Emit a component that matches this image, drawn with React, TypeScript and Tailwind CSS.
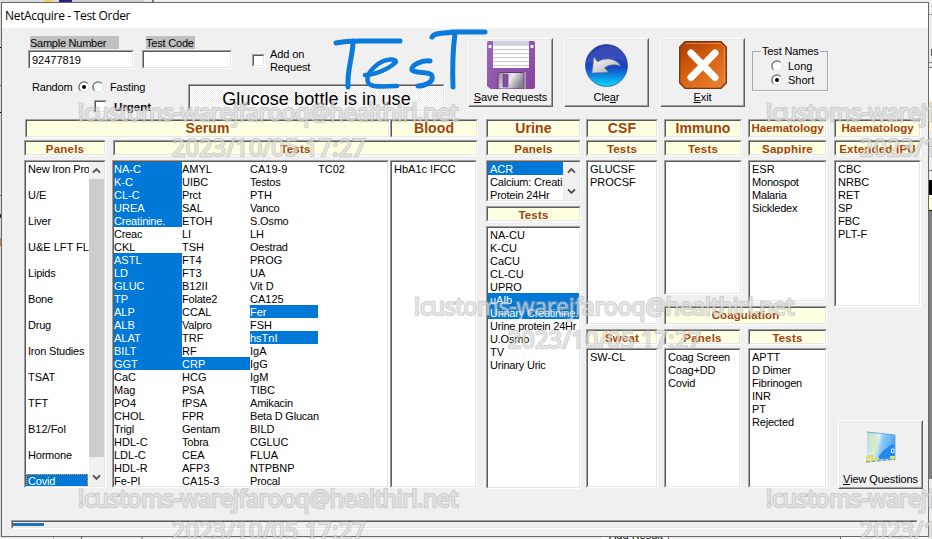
import type { ReactNode } from "react";

const mixed = (t: string) => (/[a-z]{3}/.test(t) ? "tracking-[-0.2px]" : "");

function Sunken({ className = "", inner = "bg-white", children }: { className?: string; inner?: string; children?: ReactNode }) {
  return (
    <div className={`flex shrink-0 border border-t-[#a0a0a0] border-l-[#a0a0a0] border-r-white border-b-white ${className}`}>
      <div className={`min-w-0 flex-1 overflow-hidden border border-t-[#5a5a5a] border-l-[#5a5a5a] border-r-[#e6e6e6] border-b-[#e6e6e6] ${inner}`}>
        {children}
      </div>
    </div>
  );
}

const SMALL = "text-[11.5px] leading-[13px] tracking-[0.2px] pt-[2px]";
const BIG = "text-[14px] leading-[14px] tracking-[0.1px] pb-px";
const MED = "text-[11.5px] leading-[11px] tracking-[0px] pb-[1px]";

function Head({ className = "", size = SMALL, children }: { className?: string; size?: string; children: ReactNode }) {
  return (
    <Sunken className={className} inner={`flex items-center justify-center bg-[#ffffe1] font-bold whitespace-nowrap text-[#a04310] ${size}`}>
      {children}
    </Sunken>
  );
}

function Item({ text, on = false, className = "pl-[2px]" }: { text: string; on?: boolean; className?: string }) {
  return (
    <div className={`h-[13px] overflow-hidden leading-[15px] whitespace-nowrap ${mixed(text)} ${on ? "bg-[#0078d7] text-white" : "text-black"} ${className}`}>
      {text}
    </div>
  );
}

function List({ items, on = [], className }: { items: string[]; on?: string[]; className: string }) {
  return (
    <Sunken className={className}>
      {items.map((t) => (
        <Item key={t} text={t} on={on.includes(t)} />
      ))}
    </Sunken>
  );
}

function Chevron({ down = false }: { down?: boolean }) {
  return (
    <svg width="9" height="7" viewBox="0 0 9 7" fill="none" stroke="#505050" strokeWidth="1.9">
      <path d={down ? "M1 1.3 4.5 4.9 8 1.3" : "M1 5.7 4.5 2.1 8 5.7"} />
    </svg>
  );
}

function Radio({ on = false }: { on?: boolean }) {
  return (
    <svg width="12" height="12" viewBox="0 0 12 12">
      <circle cx="6" cy="6" r="5" fill="#fff" stroke="#e3e3e3" />
      <path d="M2.4 9.6A5 5 0 0 1 9.6 2.4" fill="none" stroke="#6b6b6b" strokeWidth="1.3" />
      {on && <circle cx="6" cy="6" r="2" fill="#000" />}
    </svg>
  );
}

function PushButton({ label, hot, children }: { label: string; hot: number; children: ReactNode }) {
  return (
    <div className="flex h-[69px] w-[85px] shrink-0 border border-t-white border-r-[#606060] border-b-[#606060] border-l-white bg-[#f0f0f0]">
      <div className="flex flex-1 flex-col items-center justify-between border border-t-[#e8e8e8] border-r-[#a0a0a0] border-b-[#a0a0a0] border-l-[#e8e8e8] pb-px">
        <div className="flex flex-1 items-center justify-center">{children}</div>
        <div className="h-[14px] leading-[14px] tracking-[-0.1px] whitespace-nowrap">
          {label.slice(0, hot)}
          <span className="underline underline-offset-1">{label[hot]}</span>
          {label.slice(hot + 1)}
        </div>
      </div>
    </div>
  );
}

const panels = ["New Iron Pro", "U/E", "Liver", "U&E LFT FLU", "Lipids", "Bone", "Drug", "Iron Studies", "TSAT", "TFT", "B12/Fol", "Hormone", "Covid"];

const serum = [
  ["NA-C", "K-C", "CL-C", "UREA", "Creatinine.", "Creac", "CKL", "ASTL", "LD", "GLUC", "TP", "ALP", "ALB", "ALAT", "BILT", "GGT", "CaC", "Mag", "PO4", "CHOL", "Trigl", "HDL-C", "LDL-C", "HDL-R", "Fe-Pl"],
  ["AMYL", "UIBC", "Prct", "SAL", "ETOH", "LI", "TSH", "FT4", "FT3", "B12II", "Folate2", "CCAL", "Valpro", "TRF", "RF", "CRP", "HCG", "PSA", "fPSA", "FPR", "Gentam", "Tobra", "CEA", "AFP3", "CA15-3"],
  ["CA19-9", "Testos", "PTH", "Vanco", "S.Osmo", "LH", "Oestrad", "PROG", "UA", "Vit D", "CA125", "Fer", "FSH", "hsTnI", "IgA", "IgG", "IgM", "TIBC", "Amikacin", "Beta D Glucan", "BILD", "CGLUC", "FLUA", "NTPBNP", "Procal"],
  ["TC02"],
];
const chosen = ["NA-C", "K-C", "CL-C", "UREA", "Creatinine.", "ASTL", "LD", "GLUC", "TP", "ALP", "ALB", "ALAT", "BILT", "GGT", "CRP", "Fer", "hsTnI"];

function Mark({ className, children }: { className: string; children: string }) {
  return (
    <div className={`pointer-events-none absolute h-[24px] text-[23px] leading-[24px] whitespace-nowrap text-[#f2f2f2]/55 [-webkit-text-stroke:2.4px_rgba(165,165,165,0.45)] [paint-order:stroke_fill] [font-family:'Open_Sans','Noto_Sans',sans-serif] ${className}`}>
      {children}
    </div>
  );
}
const ADDR = "!customs-warejfarooq@healthirl.net";
const STAMP = "2023/10/05 17:27";

function Floppy() {
  return (
    <svg width="48" height="48" viewBox="0 0 48 48">
      <defs>
        <linearGradient id="fp" x1="0" y1="0" x2="1" y2="1">
          <stop offset="0" stopColor="#9c68b8" />
          <stop offset="1" stopColor="#86429f" />
        </linearGradient>
        <linearGradient id="fm" x1="0" y1="0" x2="1" y2="0.4">
          <stop offset="0" stopColor="#8b8b90" />
          <stop offset="0.55" stopColor="#e8e8ea" />
          <stop offset="1" stopColor="#85858b" />
        </linearGradient>
      </defs>
      <path d="M0 1.5Q0 0 1.5 0H46.500Q48 0 48 1.500V46Q48 48 46 48H3.500L0 45Z" fill="url(#fp)" />
      <path d="M6 0H42V27H6Z" fill="#fff" />
      <path d="M6 0H42V5H6Z" fill="#cfd3df" />
      <path d="M6 8.500H42M6 12.500H42M6 16.500H42M6 20.500H42M6 24.500H42" stroke="#c6cad6" />
      <path d="M1.500 4H4.500V7H1.500ZM43.500 4H46.500V7H43.500Z" fill="#f3e9f7" />
      <path d="M11 48V34Q11 31.500 13.500 31.500H37V48Z" fill="url(#fm)" stroke="#65327c" />
      <path d="M16 33.500H21V46H16Z" fill="#8b4aa3" stroke="#69377e" strokeWidth="0.7" />
      <path d="M38 31V48" stroke="#dccbe5" />
    </svg>
  );
}

function Undo() {
  return (
    <svg width="43" height="43" viewBox="0 0 43 43">
      <defs>
        <linearGradient id="ub" x1="0" y1="0" x2="0" y2="1">
          <stop offset="0" stopColor="#3037a5" />
          <stop offset="0.55" stopColor="#1848c2" />
          <stop offset="0.8" stopColor="#0c9be8" />
          <stop offset="1" stopColor="#12dcf4" />
        </linearGradient>
        <linearGradient id="ua" x1="0" y1="0" x2="1" y2="1">
          <stop offset="0" stopColor="#fff" />
          <stop offset="1" stopColor="#a9a9ad" />
        </linearGradient>
      </defs>
      <circle cx="21.500" cy="21.500" r="21" fill="url(#ub)" stroke="#2740a0" strokeWidth="0.7" />
      <path d="M1.500 19C5 7 15 2 24 2 34 2 40 10 41 17 28 11 14 20 1.500 19Z" fill="#5361c4" opacity="0.4" />
      <path d="M9 13 12.500 18C19 13.500 31 13.500 35.500 22 30 19.800 23.500 20.500 19.500 24L23.500 28.300 7 29Z" fill="url(#ua)" stroke="#667087" strokeWidth="0.5" />
    </svg>
  );
}

function Cross() {
  return (
    <svg width="48" height="48" viewBox="0 0 48 48">
      <defs>
        <linearGradient id="xo" x1="0" y1="0" x2="0.7" y2="1">
          <stop offset="0" stopColor="#a73c03" />
          <stop offset="0.5" stopColor="#d65d0c" />
          <stop offset="1" stopColor="#e57d2e" />
        </linearGradient>
      </defs>
      <path d="M6 .7H42L47.300 6V42L42 47.300H6L.7 42V6Z" fill="url(#xo)" stroke="#78320e" strokeWidth="1.300" />
      <path d="M6.500 2.500H41.500L45.500 6.500V41.500" fill="none" stroke="#eda065" strokeWidth="0.7" />
      <path d="M12 12 36 36.500M36 12 12 36.500" stroke="#fff" strokeWidth="7" strokeLinecap="round" />
    </svg>
  );
}

function Picture() {
  return (
    <svg width="30" height="32" viewBox="0 0 30 32">
      <defs>
        <linearGradient id="pv" x1="0" y1="0" x2="1" y2="0.3">
          <stop offset="0" stopColor="#9fd6ea" />
          <stop offset="0.42" stopColor="#e2f5fd" />
          <stop offset="0.6" stopColor="#8accf8" />
          <stop offset="1" stopColor="#4aa2ee" />
        </linearGradient>
      </defs>
      <path d="M1 1 29 4V28L1 30Z" fill="url(#pv)" />
      <path d="M1 1 29 4V28" fill="none" stroke="#5c9cc6" strokeWidth="0.8" />
      <path d="M2 3 12 4V22H4Z" fill="#dce6b7" opacity="0.7" />
      <path d="M13 25Q17 19 21 17Q25 12 28.500 14V27L13 28Z" fill="#2388e8" />
      <path d="M0 25 7 23 8 27 13 26.500V29L0 31Z" fill="#d9df73" />
      <path d="M24 25H29V28L24 28.500Z" fill="#d9df73" />
      <path d="M2 28H5M25.500 18H28V21.500H25.500Z" stroke="#fff" strokeWidth="0.8" fill="none" />
      <path d="M0 31 29 28.300" stroke="#456b8c" strokeWidth="0.8" strokeDasharray="4 1.500" />
    </svg>
  );
}

export default function App() {
  return (
    <div className="relative flex h-[539px] w-[932px] flex-col overflow-hidden bg-[#ececec] text-[11px] text-black [font-family:'Liberation_Sans',Arial,sans-serif]">
      <div className="flex h-[2px] shrink-0">
        <div className="w-[44px] bg-[#dedede]" />
        <div className="w-[9px] bg-[#f1cf67]" />
        <div className="w-[6px] bg-[#dddddd]" />
        <div className="w-[13px] bg-[#25237c]" />
        <div className="w-[72px] bg-[#cfcfcf]" />
        <div className="w-[10px] border-r-2 border-[#777] bg-[#e8e8e8]" />
        <div className="flex-1 bg-[#ededed]" />
      </div>

      <div className="flex h-[535px] shrink-0">
        <div className="flex w-px flex-col bg-[#d9d9d9] pt-[45px]">
          <div className="h-px bg-black" />
          <div className="mt-[37px] h-px bg-[#337dba]" />
          <div className="mt-[26px] h-px bg-black" />
          <div className="mt-[82px] h-px bg-[#2f76b2]" />
          <div className="mt-[18px] h-[4px] bg-[#252850]" />
          <div className="mt-[20px] h-[8px] bg-[#b98b51]" />
        </div>

        <div className="flex w-[928px] flex-col border border-[#686868] bg-[#f0f0f0]">
          <div className="flex h-[25px] shrink-0 items-center bg-white pl-[3px] text-[12px] tracking-[-0.32px] [font-family:'Open_Sans','Noto_Sans',sans-serif]">
            NetAcquire - Test Order
          </div>

          <div className="flex h-[91px] shrink-0">
            <div className="flex w-[466px] flex-col pl-[26px]">
              <div className="flex h-[48px] pt-[8px]">
                <div className="flex w-[106px] flex-col">
                  <div className="ml-[2px] h-[13px] w-[89px] bg-[#c0c0c0] leading-[15px] tracking-[-0.25px]">Sample Number</div>
                  <Sunken className="mt-px h-[19px]" inner="bg-white pl-[2px] leading-[16px] tracking-[0px]">92477819</Sunken>
                </div>
                <div className="ml-[8px] flex w-[90px] flex-col">
                  <div className="ml-[4px] h-[13px] w-[49px] bg-[#c0c0c0] leading-[15px] tracking-[-0.2px] whitespace-nowrap">Test Code</div>
                  <Sunken className="mt-px h-[19px]" />
                </div>
                <div className="ml-[20px] flex">
                  <Sunken className="mt-[18px] h-[13px] w-[13px]" />
                  <div className="mt-[12px] ml-[5px] leading-[13px] tracking-[-0.1px]">Add on<br />Request</div>
                </div>
              </div>
              <div className="flex">
                <div className="flex w-[160px] flex-col">
                  <div className="mt-[4px] flex h-[14px] items-center pl-[4px] leading-[14px]">
                    <span className="w-[46px] tracking-[-0.2px]">Random</span>
                    <Radio on />
                    <span className="w-[2px]" />
                    <Radio />
                    <span className="ml-[6px] tracking-[-0.1px]">Fasting</span>
                  </div>
                  <div className="mt-[5px] flex h-[14px] items-center pl-[66px]">
                    <Sunken className="h-[13px] w-[13px]" />
                    <span className="ml-[7px] pt-px text-[11.5px] leading-[14px] font-bold">Urgent</span>
                  </div>
                </div>
                <Sunken
                  className="mt-[8px] h-[28px] w-[257px]"
                  inner="flex items-center justify-center whitespace-nowrap pt-[2px] text-[18px] leading-[20px] tracking-[0.1px] bg-[#f7f7f7] bg-[repeating-conic-gradient(#ececec_0_25%,#ffffff_0_50%)] bg-[size:2px_2px]"
                >
                  Glucose bottle is in use
                </Sunken>
              </div>
            </div>
            <div className="flex gap-[11px] pt-[10px]">
              <PushButton label="Save Requests" hot={0}><Floppy /></PushButton>
              <PushButton label="Clear" hot={3}><Undo /></PushButton>
              <PushButton label="Exit" hot={0}><Cross /></PushButton>
            </div>
            <fieldset className="mt-[17px] ml-[7px] h-[46px] w-[76px] border border-[#a8a8a8] pl-[18px] shadow-[1px_1px_0_#fff]">
              <legend className="-ml-[10px] px-[1px] leading-[13px] tracking-[-0.15px] whitespace-nowrap">Test Names</legend>
              <div className="mt-[1px] flex h-[14px] items-center gap-[5px]"><Radio /> Long</div>
              <div className="flex h-[14px] items-center gap-[5px]"><Radio on /> Short</div>
            </fieldset>
          </div>

          <div className="flex h-[370px] shrink-0 pl-[22px]">
            <div className="flex w-[454px] flex-col">
              <div className="flex pl-px">
                <Head className="h-[19px] w-[365px]" size={BIG}>Serum</Head>
                <Head className="h-[19px] w-[88px]" size={BIG}>Blood</Head>
              </div>
              <div className="mt-[2px] flex gap-[7px]">
                <Head className="h-[16px] w-[82px]">Panels</Head>
                <Head className="h-[16px] w-[365px]">Tests</Head>
              </div>
              <div className="mt-[4px] flex">
                <Sunken className="h-[328px] w-[82px]" inner="flex bg-white">
                  <div className="w-[63px]">
                    {panels.map((p) => (
                      <div key={p} className="h-[26px]">
                        <Item text={p} on={p === "Covid"} className={p === "Covid" ? "w-[62px] border border-dotted border-[#ff9a40] pl-px !leading-[12px]" : "pl-[2px]"} />
                      </div>
                    ))}
                  </div>
                  <div className="flex w-[15px] flex-col items-center justify-between bg-[#f0f0f0]">
                    <div className="flex h-[17px] items-center"><Chevron /></div>
                    <div className="w-full flex-1 bg-[#cdcdcd]" />
                    <div className="flex h-[29px] items-end pb-[5px]"><Chevron down /></div>
                  </div>
                </Sunken>
                <Sunken className="ml-[6px] h-[328px] w-[277px]" inner="flex bg-white">
                  {serum.map((col, i) => (
                    <div key={i} className="w-[68px]">
                      {col.map((t) => (
                        <Item
                          key={t}
                          text={t}
                          on={chosen.includes(t)}
                          className={t === "Beta D Glucan" ? "!overflow-visible" : ""}
                        />
                      ))}
                    </div>
                  ))}
                </Sunken>
                <List className="ml-px h-[328px] w-[87px]" items={["HbA1c IFCC"]} />
              </div>
            </div>

            <div className="ml-[8px] flex w-[95px] flex-col">
              <Head className="h-[19px]" size={BIG}>Urine</Head>
              <Head className="mt-[2px] h-[16px]">Panels</Head>
              <Sunken className="mt-[4px] h-[42px]" inner="flex bg-white">
                <div className="w-[75px] overflow-hidden">
                  <Item text="ACR" on />
                  <Item text="Calcium: Creatinine" />
                  <Item text="Protein 24Hr" />
                </div>
                <div className="flex flex-1 flex-col items-center justify-between bg-[#f0f0f0] py-[5px]">
                  <Chevron />
                  <Chevron down />
                </div>
              </Sunken>
              <Head className="mt-[4px] h-[16px]">Tests</Head>
              <List
                className="mt-[4px] h-[263px]"
                items={["NA-CU", "K-CU", "CaCU", "CL-CU", "UPRO", "uAlb", "Urinary Creatinine.", "Urine protein 24Hr", "U.Osmo", "TV", "Urinary Uric"]}
                on={["uAlb", "Urinary Creatinine."]}
              />
            </div>

            <div className="ml-[5px] flex w-[72px] flex-col">
              <Head className="h-[19px]" size={BIG}>CSF</Head>
              <Head className="mt-[2px] h-[16px]">Tests</Head>
              <List className="mt-[4px] h-[165px]" items={["GLUCSF", "PROCSF"]} />
              <Head className="mt-[4px] h-[16px]">Sweat</Head>
              <List className="mt-[3px] h-[140px]" items={["SW-CL"]} />
            </div>

            <div className="ml-[6px] flex w-[163px] flex-col">
              <div className="flex h-[187px] justify-between">
                <div className="flex w-[78px] flex-col">
                  <Head className="h-[19px]" size={BIG}>Immuno</Head>
                  <Head className="mt-[2px] h-[16px]">Tests</Head>
                  <List className="mt-[4px] h-[135px]" items={[]} />
                </div>
                <div className="flex w-[79px] flex-col">
                  <Head className="h-[19px]" size={MED}>Haematology</Head>
                  <Head className="mt-[2px] h-[16px]">Sapphire</Head>
                  <List className="mt-[4px] h-[142px]" items={["ESR", "Monospot", "Malaria", "Sickledex"]} />
                </div>
              </div>
              <Head className="h-[19px]" size="text-[11.5px] leading-[13px] tracking-[0.1px]">Coagulation</Head>
              <div className="mt-[4px] flex justify-between">
                <Head className="h-[16px] w-[77px]">Panels</Head>
                <Head className="h-[16px] w-[79px]">Tests</Head>
              </div>
              <div className="mt-[3px] flex justify-between">
                <List className="h-[140px] w-[77px]" items={["Coag Screen", "Coag+DD", "Covid"]} />
                <List className="h-[140px] w-[79px]" items={["APTT", "D Dimer", "Fibrinogen", "INR", "PT", "Rejected"]} />
              </div>
            </div>

            <div className="ml-[7px] flex w-[89px] flex-col">
              <Head className="h-[19px] w-[87px]" size={MED}>Haematology</Head>
              <Head className="mt-[2px] h-[16px] w-[87px]">Extended IPU</Head>
              <List className="mt-[4px] h-[147px] w-[87px]" items={["CBC", "NRBC", "RET", "SP", "FBC", "PLT-F"]} />
              <div className="mt-[113px] ml-[4px]">
                <PushButton label="View Questions" hot={0}><Picture /></PushButton>
              </div>
            </div>
          </div>

          <Sunken className="mt-[31px] ml-[9px] h-[9px] w-[907px]" inner="bg-[#f0f0f0] pt-px">
            <div className="h-[3px] w-[31px] bg-[#1c72b4]" />
          </Sunken>
        </div>

        <div className="flex w-[3px] flex-col bg-[#ededed] pt-[12px]">
          <div className="h-px bg-[#999]" />
          <div className="mt-[34px] h-[7px] border-r border-[#555]" />
          <div className="mt-[6px] h-px bg-[#777]" />
          <div className="mt-[4px] h-[33px] border-t border-[#777] bg-white" />
          <div className="h-[30px] bg-[#fdf5cf]" />
          <div className="mt-[16px] h-px bg-[#777]" />
          <div className="mt-[23px] h-px bg-[#777]" />
          <div className="mt-[9px] h-[15px] bg-black" />
          <div className="h-[15px] bg-[#ffffd8]" />
          <div className="h-[269px] border-t border-black bg-[#808080]" />
        </div>
      </div>

      <div className="flex h-[2px] shrink-0 bg-[#ededed]">
        <div className="w-[54px] border-r border-[#aaa]" />
        <div className="w-[28px] border-r border-[#555]" />
        <div className="w-[60px] border-r border-[#aaa]" />
        <div className="w-[460px] border-l border-[#aaa]" />
        <div className="h-[2px] w-[66px] overflow-hidden bg-white pl-[7px]"><div className="-mt-[8px] leading-[12px] whitespace-nowrap">Add Result</div></div>
        <div className="w-[173px] border-x border-[#666]" />
        <div className="flex-1 bg-white" />
      </div>

      <svg className="absolute top-[28px] left-[328px]" width="165" height="66" viewBox="328 28 165 66" fill="none" stroke="#0a7bdc" strokeWidth="5" strokeLinecap="round" strokeLinejoin="round">
        <path d="M336 43C348 40 359 41 374 41H400" />
        <path d="M353 41C353 57 347 68 348 87" />
        <path d="M365 75C376 75 390 68 396 62C395 58 385 59 378 64C369 71 365 78 369 84C374 88 386 86 397 86" strokeWidth="4.500" />
        <path d="M430 61C422 60 411 65 412 70C415 74 431 71 432 76C434 82 425 86 418 86" />
        <path d="M432 37C435 32 444 34 453 32H485" />
        <path d="M455 33C453 49 452 62 453 87" />
      </svg>

      <Mark className="top-[100px] left-[78px] tracking-[-0.15px]">{ADDR}</Mark>
      <Mark className="top-[135px] left-[172px] tracking-[0.45px]">{STAMP}</Mark>
      <Mark className="top-[294px] left-[414px] tracking-[-0.15px]">{ADDR}</Mark>
      <Mark className="top-[327px] left-[508px] tracking-[0.45px]">{STAMP}</Mark>
      <Mark className="top-[486px] left-[78px] tracking-[-0.15px]">{ADDR}</Mark>
      <Mark className="top-[518px] left-[172px] tracking-[0.45px]">{STAMP}</Mark>
      <Mark className="top-[100px] left-[766px] tracking-[-0.15px]">{ADDR}</Mark>
      <Mark className="top-[135px] left-[860px] tracking-[0.45px]">{STAMP}</Mark>
      <Mark className="top-[486px] left-[766px] tracking-[-0.15px]">{ADDR}</Mark>
      <Mark className="top-[518px] left-[860px] tracking-[0.45px]">{STAMP}</Mark>
    </div>
  );
}
